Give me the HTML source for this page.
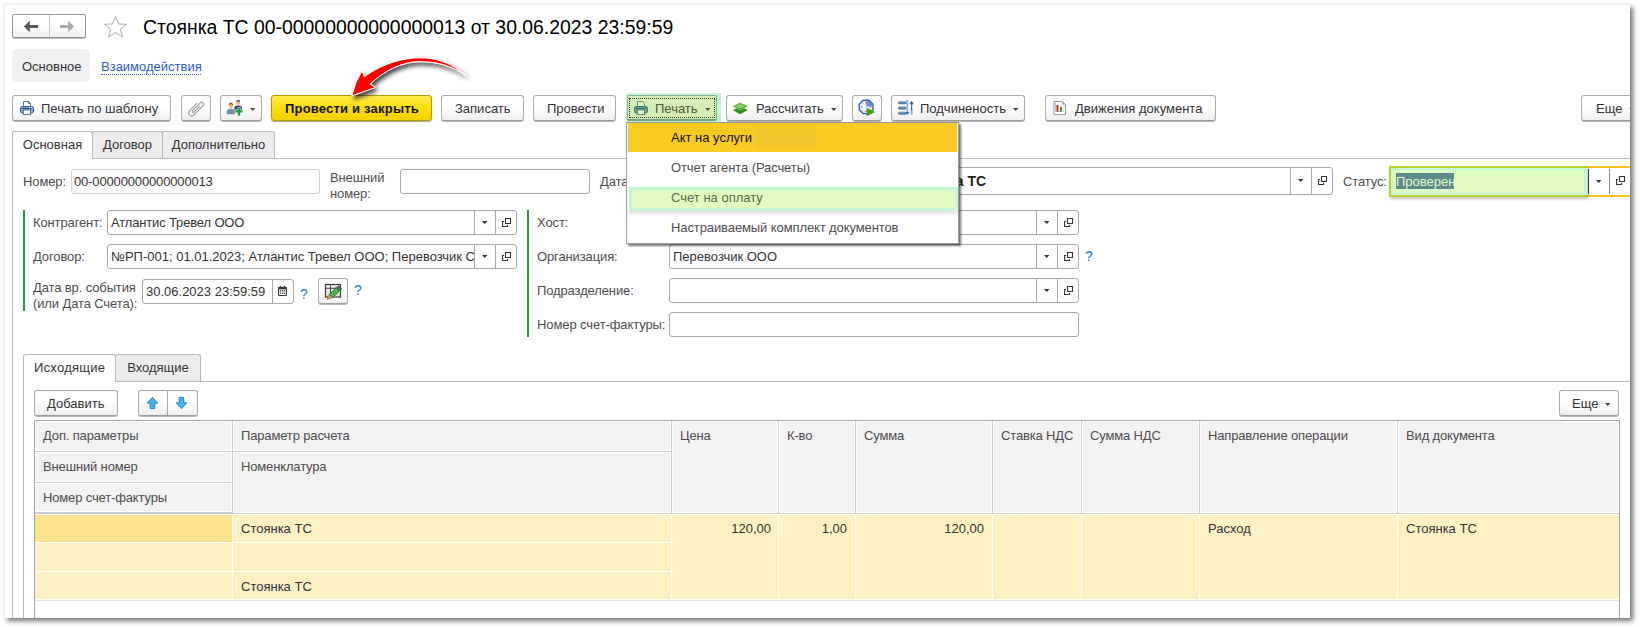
<!DOCTYPE html>
<html><head><meta charset="utf-8">
<style>
*{box-sizing:border-box;margin:0;padding:0}
html,body{width:1640px;height:627px;overflow:hidden;background:#fff}
body{position:relative;font-family:"Liberation Sans",sans-serif;font-size:13px;color:#4d4d4d}
.a{position:absolute}
.frame{position:absolute;left:4px;top:4px;width:1626px;height:614px;background:#fff;border-top:1px solid #ececec;border-left:1px solid #ececec;box-shadow:3px 3px 5px rgba(0,0,0,.55)}
.t{position:absolute;white-space:nowrap;line-height:15px}
.btn{position:absolute;height:26px;border:1px solid #ababab;border-bottom-color:#9a9a9a;border-radius:3px;background:linear-gradient(#fff 0%,#fff 45%,#eeeeee 100%);box-shadow:0 1px 0 rgba(0,0,0,.28);color:#333;white-space:nowrap;line-height:23px;font-size:13px}
.fld{position:absolute;height:25px;border:1px solid #a8a8a8;border-radius:3px;background:#fff;color:#333;white-space:nowrap;line-height:23px}
.tab{position:absolute;border:1px solid #b8b8b8;border-bottom:none;border-radius:3px 3px 0 0;background:#ececec;color:#333;line-height:26px;text-align:center}
.tab.on{background:#fff}
.lbl{position:absolute;white-space:nowrap;color:#4d4d4d;line-height:15px;letter-spacing:-0.12px}
.vd{position:absolute;top:0;bottom:0;width:1px;background:#b0b0b0}
.q{position:absolute;color:#1a7cc4;font-size:14px;line-height:13px}
.gbar{position:absolute;width:2px;background:#1f9a3a}
.hd{position:absolute;background:#f2f2f2;color:#4d4d4d;font-size:13px;line-height:15px}
.cell{position:absolute;color:#333;white-space:nowrap;line-height:15px}
</style></head><body>
<div class="frame"></div>
<div style="position:absolute;left:0;top:0;width:1630px;height:618px;overflow:hidden">

<!-- nav -->
<div class="a" style="left:12px;top:14px;width:74px;height:24px;border:1px solid #969696;border-bottom-color:#909090;border-radius:2px;background:linear-gradient(#fff 40%,#f0f0f0);box-shadow:0 1px 0 rgba(0,0,0,.25)"></div>
<div class="a" style="left:49px;top:15px;width:1px;height:22px;background:#c8c8c8"></div>
<svg class="a" style="left:23px;top:20px" width="16" height="14" viewBox="0 0 16 14"><path d="M0.8 6.5L6.8 0.8V5H15V8H6.8V12.2Z" fill="#555"/></svg>
<svg class="a" style="left:59px;top:20px" width="16" height="14" viewBox="0 0 16 14"><path d="M15.2 6.5L9.2 0.8V5H1V8H9.2V12.2Z" fill="#aaa"/></svg>
<svg class="a" style="left:103px;top:15px" width="25" height="24" viewBox="0 0 25 24"><path d="M12.5 1.5 L15.6 9 L23.5 9.3 L17.3 14.2 L19.5 22 L12.5 17.5 L5.5 22 L7.7 14.2 L1.5 9.3 L9.4 9 Z" fill="none" stroke="#a9b0b8" stroke-width="1"/></svg>
<div class="t" style="left:143px;top:17px;font-size:19.4px;line-height:20px;color:#000;letter-spacing:0">Стоянка ТС 00-00000000000000013 от 30.06.2023 23:59:59</div>

<!-- section tabs -->
<div class="a" style="left:12px;top:49px;width:78px;height:33px;background:#f0f0f0;border-radius:5px"></div>
<div class="t" style="left:22px;top:59px;color:#333">Основное</div>
<div class="t" style="left:101px;top:59px;color:#2d5ccc">Взаимодействия</div>
<div class="a" style="left:101px;top:74px;width:100px;height:0;border-top:1px dotted #3a66cc"></div>

<!-- toolbar -->
<div class="btn" style="left:12px;top:95px;width:159px"></div>
<svg class="a" style="left:20px;top:101px" width="14" height="14" viewBox="0 0 14 14"><path d="M3.5 0.5H8.5L10.5 2.5V6H3.5Z" fill="#fff" stroke="#5a7a98"/><path d="M8.5 0.5V2.5H10.5" fill="#5a7a98" stroke="#5a7a98"/><rect x="0.5" y="5.5" width="13" height="6.5" rx="1.8" fill="#7fa6cb" stroke="#2c5a84"/><path d="M2 7.5H12" stroke="#2c5a84"/><rect x="9" y="6" width="1.2" height="1" fill="#fff"/><rect x="11" y="6" width="1.2" height="1" fill="#fff"/><rect x="3.5" y="9" width="7" height="4.5" fill="#fff" stroke="#5a7a98"/></svg>
<div class="t" style="left:41px;top:101px;color:#333">Печать по шаблону</div>
<div class="btn" style="left:181px;top:95px;width:30px"></div>
<svg class="a" style="left:186px;top:98px" width="20" height="20" viewBox="-10 -10 20 20"><path d="M1 -4.5V4A1 1 0 0 1 -1 4V-7A2 2 0 0 1 3 -7V6A3 3 0 0 1 -3 6V-4.5" fill="none" stroke="#9a9a9a" stroke-width="1.1" transform="translate(0,0.5) rotate(45)"/></svg>
<div class="btn" style="left:220px;top:95px;width:42px"></div>
<svg class="a" style="left:226px;top:99px" width="18" height="18" viewBox="0 0 18 18">
<path d="M0.8 15.2V12.3Q0.8 10.2 3 9.9L4.9 9.6L6.8 9.9Q9 10.2 9 12.3V15.2Z" fill="#6a8fb0"/>
<path d="M4.5 10L4.9 15L5.3 10Z" fill="#e07850"/>
<ellipse cx="4.9" cy="7" rx="2.1" ry="2.6" fill="#f0c070"/><path d="M2.7 6.6Q2.7 3.8 4.9 3.8Q7.1 3.8 7.1 6.6Q6.5 5.2 4.9 5.2Q3.3 5.2 2.7 6.6Z" fill="#8a4a10"/>
<path d="M8.4 10.8V8.8Q8.4 7 10.4 6.7L12.2 6.5L14 6.7Q16 7 16 8.8V10.8Z" fill="#2c3f72"/>
<ellipse cx="12.2" cy="3.8" rx="2" ry="2.4" fill="#f0c070"/><path d="M10.1 3.4Q10.1 1 12.2 1Q14.3 1 14.3 3.4Q13.7 2.2 12.2 2.2Q10.7 2.2 10.1 3.4Z" fill="#23284a"/>
<path d="M11.6 8.6H14.4V11H16.9V13.8H14.4V16.9H11.6V13.8H9.1V11H11.6Z" fill="#16a03a" stroke="#fff" stroke-width="0.5"/>
</svg>
<svg class="a" style="left:250px;top:108px" width="6" height="4" viewBox="0 0 6 4"><path d="M0 0H5.5L2.75 3Z" fill="#444"/></svg>
<div class="btn" style="left:271px;top:95px;width:161px;border-color:#b49800;background:linear-gradient(#ffea50,#fbdc00 55%,#f3cf00);box-shadow:0 1px 1px rgba(80,60,0,.45)"></div>
<div class="t" style="left:285px;top:101px;font-weight:bold;color:#111;letter-spacing:0.2px">Провести и закрыть</div>
<div class="btn" style="left:441px;top:95px;width:83px"></div>
<div class="t" style="left:455px;top:101px;color:#333">Записать</div>
<div class="btn" style="left:533px;top:95px;width:83px"></div>
<div class="t" style="left:547px;top:101px;color:#333">Провести</div>
<!-- Печать pressed -->
<div class="a" style="left:626px;top:93px;width:95px;height:29px;background:#c4f6d2"></div>
<div class="a" style="left:627px;top:95px;width:90px;height:26px;border:1px solid #84b595;border-bottom:2px solid #6fa382;border-radius:2px;background:#d5edb6"></div>
<div class="a" style="left:629px;top:98px;width:86px;height:20px;border:1px dotted #2f3a22"></div>
<svg class="a" style="left:634px;top:101px" width="14" height="14" viewBox="0 0 14 14"><path d="M3.5 0.5H8.5L10.5 2.5V6H3.5Z" fill="#dff7c4" stroke="#5f8a72"/><rect x="0.5" y="5.5" width="13" height="6.5" rx="1.8" fill="#6a9f88" stroke="#3a7460"/><path d="M2 7.5H12" stroke="#3a7460"/><rect x="3.5" y="9" width="7" height="4.5" fill="#dff7c4" stroke="#5f8a72"/></svg>
<div class="t" style="left:655px;top:101px;color:#4d5a3c">Печать</div>
<svg class="a" style="left:705px;top:108px" width="6" height="4" viewBox="0 0 6 4"><path d="M0 0H5.5L2.75 3Z" fill="#4a5a3a"/></svg>
<div class="btn" style="left:726px;top:95px;width:117px"></div>
<svg class="a" style="left:732px;top:102px" width="17" height="13" viewBox="0 0 17 13"><path d="M0.8 8L8.2 4.6L15.8 8L8.2 12.2Z" fill="#2f9416"/><path d="M0.8 4.3L8.2 0.8L15.8 4.3L8.2 8Z" fill="#4aa82a" stroke="#c8ecb0" stroke-width="0.4"/><path d="M3.5 4.3L8.2 2.1L13 4.3L8.2 6.6Z" fill="#8fd66a"/></svg>
<div class="t" style="left:756px;top:101px;color:#333">Рассчитать</div>
<svg class="a" style="left:831px;top:108px" width="6" height="4" viewBox="0 0 6 4"><path d="M0 0H5.5L2.75 3Z" fill="#444"/></svg>
<div class="btn" style="left:852px;top:95px;width:30px"></div>
<svg class="a" style="left:858px;top:99px" width="18" height="18" viewBox="0 0 18 18"><path d="M5 1.2H11L15 5.2V10.6L11 14.6H5L1.2 10.6V5.2Z" fill="#e8f0fb" stroke="#3563b0" stroke-width="1.4"/><path d="M8.3 2H10.8L14.2 5.4V7.6H8.3Z" fill="#6f90c8"/><circle cx="3.7" cy="8" r="0.8" fill="#f04a3a"/><circle cx="12.5" cy="8" r="0.8" fill="#f04a3a"/><circle cx="8" cy="3.6" r="0.8" fill="#f04a3a"/><circle cx="8" cy="12.3" r="0.8" fill="#f04a3a"/><path d="M8.6 8.8L17.2 13L8.6 17.2Z" fill="#3c9f16"/></svg>
<div class="btn" style="left:891px;top:95px;width:134px"></div>
<svg class="a" style="left:897px;top:100px" width="18" height="16" viewBox="0 0 18 16"><defs><linearGradient id="bg1" x1="0" y1="0" x2="0" y2="1"><stop offset="0" stop-color="#9fbad6"/><stop offset="0.5" stop-color="#5a88b4"/><stop offset="1" stop-color="#3f6f9e"/></linearGradient></defs><rect x="1" y="1" width="8.5" height="3.3" rx="1.6" fill="url(#bg1)"/><rect x="1" y="6.2" width="8.5" height="3.3" rx="1.6" fill="url(#bg1)"/><rect x="1" y="11.4" width="8.5" height="3.3" rx="1.6" fill="url(#bg1)"/><path d="M10.3 0.5V12.5" stroke="#3a6aa0" stroke-width="2" stroke-dasharray="1 1"/><path d="M8.3 12H12.3L10.3 15Z" fill="#2f5f95"/><path d="M14.6 3.5V10" stroke="#2f5f95" stroke-width="1.1"/><path d="M12.4 4.3L14.6 0.8L16.8 4.3Z" fill="#2f5f95"/><path d="M14.6 9.5V15" stroke="#3a6aa0" stroke-width="2.2" stroke-dasharray="1 1"/></svg>
<div class="t" style="left:920px;top:101px;color:#333">Подчиненость</div>
<svg class="a" style="left:1013px;top:108px" width="6" height="4" viewBox="0 0 6 4"><path d="M0 0H5.5L2.75 3Z" fill="#444"/></svg>
<div class="btn" style="left:1045px;top:95px;width:171px"></div>
<svg class="a" style="left:1053px;top:100px" width="14" height="16" viewBox="0 0 14 16"><path d="M1 1.5H9.5L12.5 4.5V14.5H1Z" fill="#fff" stroke="#8a98a8"/><path d="M9.5 1.5V4.5H12.5Z" fill="#8a98a8"/><path d="M2.5 3V11.5H11" fill="none" stroke="#8a9ab0" stroke-width="0.6"/><rect x="3.5" y="5" width="2" height="6.5" fill="#f02010"/><rect x="7" y="6.8" width="2" height="4.7" fill="#20a020"/></svg>
<div class="t" style="left:1075px;top:101px;color:#333">Движения документа</div>
<div class="btn" style="left:1581px;top:95px;width:60px"></div>
<div class="t" style="left:1596px;top:101px;color:#333">Еще</div>
<svg class="a" style="left:1629px;top:108px" width="6" height="4" viewBox="0 0 6 4"><path d="M0 0H5.5L2.75 3Z" fill="#444"/></svg>

<!-- main tabs -->
<div class="a" style="left:12px;top:158px;width:1620px;height:1px;background:#b8b8b8"></div>
<div class="a" style="left:12px;top:158px;width:1px;height:461px;background:#b8b8b8"></div>
<div class="tab" style="left:92px;top:131px;width:71px;height:27px">Договор</div>
<div class="tab" style="left:162px;top:131px;width:113px;height:27px">Дополнительно</div>
<div class="tab on" style="left:12px;top:131px;width:81px;height:28px">Основная</div>

<!-- Row Номер -->
<div class="lbl" style="left:23px;top:174px">Номер:</div>
<div class="fld" style="left:71px;top:169px;width:249px;border-color:#d0d0d0"><span style="margin-left:2px;letter-spacing:-0.15px">00-00000000000000013</span></div>
<div class="lbl" style="left:330px;top:170px">Внешний</div>
<div class="lbl" style="left:330px;top:186px">номер:</div>
<div class="fld" style="left:400px;top:169px;width:190px"></div>
<div class="lbl" style="left:600px;top:174px">Дата</div>
<div class="fld" style="left:700px;top:167px;width:633px;height:28px"></div>
<div class="a" style="left:1290px;top:168px;width:1px;height:26px;background:#a8a8a8"></div>
<div class="a" style="left:1311px;top:168px;width:1px;height:26px;background:#a8a8a8"></div>
<svg class="a" style="left:1298px;top:179px" width="6" height="4" viewBox="0 0 6 4"><path d="M0 0H5.5L2.75 3Z" fill="#333"/></svg>
<svg class="a" style="left:1318px;top:176px" width="10" height="10" viewBox="0 0 10 10"><path d="M3.5 0.5H8.5V5.5H3.5Z" fill="none" stroke="#333" stroke-width="1.1"/><path d="M2 3.5H0.6V8.5H5.5V7" fill="none" stroke="#333" stroke-width="1.1"/></svg>
<div class="t" style="left:907px;top:173px;font-weight:bold;color:#222;font-size:14px;line-height:17px">Стоянка ТС</div>
<div class="lbl" style="left:1343px;top:174px">Статус:</div>

<!-- left group -->
<div class="gbar" style="left:23px;top:210px;height:101px"></div>
<div class="lbl" style="left:33px;top:215px">Контрагент:</div>
<div class="fld" style="left:107px;top:210px;width:410px"><span style="margin-left:3px;letter-spacing:-0.15px">Атлантис Тревел ООО</span></div>
<div class="lbl" style="left:33px;top:249px">Договор:</div>
<div class="fld" style="left:107px;top:244px;width:410px;overflow:hidden"><span style="margin-left:3px">№РП-001; 01.01.2023; Атлантис Тревел ООО; Перевозчик С</span></div>
<div class="lbl" style="left:33px;top:280px;letter-spacing:-0.12px">Дата вр. события</div>
<div class="lbl" style="left:33px;top:296px;letter-spacing:-0.12px">(или Дата Счета):</div>
<div class="fld" style="left:142px;top:279px;width:152px"><span style="margin-left:3px">30.06.2023 23:59:59</span></div>
<div class="q" style="left:300px;top:288px">?</div>
<div class="btn" style="left:318px;top:278px;width:30px"></div>
<div class="q" style="left:354px;top:284px">?</div>

<!-- right group -->
<div class="gbar" style="left:527px;top:210px;height:127px"></div>
<div class="lbl" style="left:537px;top:215px">Хост:</div>
<div class="fld" style="left:669px;top:210px;width:410px"></div>
<div class="lbl" style="left:537px;top:249px">Организация:</div>
<div class="fld" style="left:669px;top:244px;width:410px"><span style="margin-left:3px">Перевозчик ООО</span></div>
<div class="q" style="left:1085px;top:250px">?</div>
<div class="lbl" style="left:537px;top:283px">Подразделение:</div>
<div class="fld" style="left:669px;top:278px;width:410px"></div>
<div class="lbl" style="left:537px;top:317px;letter-spacing:-0.1px">Номер счет-фактуры:</div>
<div class="fld" style="left:669px;top:312px;width:410px"></div>

<div class="a" style="left:474px;top:211px;width:1px;height:23px;background:#a8a8a8"></div>
<div class="a" style="left:495px;top:211px;width:1px;height:23px;background:#a8a8a8"></div>
<svg class="a" style="left:482px;top:221px" width="6" height="4" viewBox="0 0 6 4"><path d="M0 0H5.5L2.75 3Z" fill="#333"/></svg>
<svg class="a" style="left:502px;top:218px" width="10" height="10" viewBox="0 0 10 10"><path d="M3.5 0.5H8.5V5.5H3.5Z" fill="none" stroke="#333" stroke-width="1.1"/><path d="M2 3.5H0.6V8.5H5.5V7" fill="none" stroke="#333" stroke-width="1.1"/></svg>
<div class="a" style="left:474px;top:245px;width:1px;height:23px;background:#a8a8a8"></div>
<div class="a" style="left:495px;top:245px;width:1px;height:23px;background:#a8a8a8"></div>
<svg class="a" style="left:482px;top:255px" width="6" height="4" viewBox="0 0 6 4"><path d="M0 0H5.5L2.75 3Z" fill="#333"/></svg>
<svg class="a" style="left:502px;top:252px" width="10" height="10" viewBox="0 0 10 10"><path d="M3.5 0.5H8.5V5.5H3.5Z" fill="none" stroke="#333" stroke-width="1.1"/><path d="M2 3.5H0.6V8.5H5.5V7" fill="none" stroke="#333" stroke-width="1.1"/></svg>
<div class="a" style="left:1036px;top:211px;width:1px;height:23px;background:#a8a8a8"></div>
<div class="a" style="left:1057px;top:211px;width:1px;height:23px;background:#a8a8a8"></div>
<svg class="a" style="left:1044px;top:221px" width="6" height="4" viewBox="0 0 6 4"><path d="M0 0H5.5L2.75 3Z" fill="#333"/></svg>
<svg class="a" style="left:1064px;top:218px" width="10" height="10" viewBox="0 0 10 10"><path d="M3.5 0.5H8.5V5.5H3.5Z" fill="none" stroke="#333" stroke-width="1.1"/><path d="M2 3.5H0.6V8.5H5.5V7" fill="none" stroke="#333" stroke-width="1.1"/></svg>
<div class="a" style="left:1036px;top:245px;width:1px;height:23px;background:#a8a8a8"></div>
<div class="a" style="left:1057px;top:245px;width:1px;height:23px;background:#a8a8a8"></div>
<svg class="a" style="left:1044px;top:255px" width="6" height="4" viewBox="0 0 6 4"><path d="M0 0H5.5L2.75 3Z" fill="#333"/></svg>
<svg class="a" style="left:1064px;top:252px" width="10" height="10" viewBox="0 0 10 10"><path d="M3.5 0.5H8.5V5.5H3.5Z" fill="none" stroke="#333" stroke-width="1.1"/><path d="M2 3.5H0.6V8.5H5.5V7" fill="none" stroke="#333" stroke-width="1.1"/></svg>
<div class="a" style="left:1036px;top:279px;width:1px;height:23px;background:#a8a8a8"></div>
<div class="a" style="left:1057px;top:279px;width:1px;height:23px;background:#a8a8a8"></div>
<svg class="a" style="left:1044px;top:289px" width="6" height="4" viewBox="0 0 6 4"><path d="M0 0H5.5L2.75 3Z" fill="#333"/></svg>
<svg class="a" style="left:1064px;top:286px" width="10" height="10" viewBox="0 0 10 10"><path d="M3.5 0.5H8.5V5.5H3.5Z" fill="none" stroke="#333" stroke-width="1.1"/><path d="M2 3.5H0.6V8.5H5.5V7" fill="none" stroke="#333" stroke-width="1.1"/></svg>
<!-- lower tabs -->
<div class="a" style="left:23px;top:381px;width:1609px;height:1px;background:#b8b8b8"></div>
<div class="a" style="left:23px;top:381px;width:1px;height:238px;background:#b8b8b8"></div>
<div class="tab" style="left:115px;top:354px;width:86px;height:27px">Входящие</div>
<div class="tab on" style="left:23px;top:354px;width:93px;height:28px;text-align:left;padding-left:10px;letter-spacing:0.25px">Исходящие</div>
<div class="btn" style="left:34px;top:390px;width:84px"></div>
<div class="t" style="left:47px;top:396px;color:#333">Добавить</div>
<div class="btn" style="left:138px;top:390px;width:60px"></div>
<div class="a" style="left:167px;top:391px;width:1px;height:24px;background:#a8a8a8"></div>
<svg class="a" style="left:146px;top:396px" width="13" height="14" viewBox="0 0 13 14"><path d="M1.2 7.2L6.5 1.3L11.8 7.2H8.8V12.6H4.2V7.2Z" fill="#48b0ea" stroke="#1f7bbf" stroke-width="0.9" stroke-linejoin="miter"/></svg>
<svg class="a" style="left:175px;top:396px" width="13" height="14" viewBox="0 0 13 14"><path d="M1.2 6.8L6.5 12.7L11.8 6.8H8.8V1.4H4.2V6.8Z" fill="#48b0ea" stroke="#1f7bbf" stroke-width="0.9" stroke-linejoin="miter"/></svg>
<div class="btn" style="left:1559px;top:390px;width:60px"></div>
<div class="t" style="left:1572px;top:396px;color:#333">Еще</div>
<svg class="a" style="left:1605px;top:403px" width="6" height="4" viewBox="0 0 6 4"><path d="M0 0H5.5L2.75 3Z" fill="#444"/></svg>

<!-- table -->
<div class="a" style="left:34px;top:420px;width:1586px;height:199px;border:1px solid #a6a6a6;border-bottom:none;background:#fff"></div>
<div class="a" style="left:35px;top:421px;width:1584px;height:93px;background:#cdcdcd"></div>
<div class="a" style="left:35px;top:421px;width:197px;height:30px;background:#f2f2f2;box-shadow:inset 0 0 0 1px #fff"></div>
<div class="a" style="left:35px;top:452px;width:197px;height:30px;background:#f2f2f2;box-shadow:inset 0 0 0 1px #fff"></div>
<div class="a" style="left:35px;top:483px;width:197px;height:29px;background:#f2f2f2;box-shadow:inset 0 0 0 1px #fff"></div>
<div class="a" style="left:233px;top:421px;width:438px;height:30px;background:#f2f2f2;box-shadow:inset 0 0 0 1px #fff"></div>
<div class="a" style="left:233px;top:452px;width:438px;height:61px;background:#f2f2f2;box-shadow:inset 0 0 0 1px #fff"></div>
<div class="a" style="left:672px;top:421px;width:106px;height:92px;background:#f2f2f2;box-shadow:inset 0 0 0 1px #fff"></div>
<div class="a" style="left:779px;top:421px;width:76px;height:92px;background:#f2f2f2;box-shadow:inset 0 0 0 1px #fff"></div>
<div class="a" style="left:856px;top:421px;width:136px;height:92px;background:#f2f2f2;box-shadow:inset 0 0 0 1px #fff"></div>
<div class="a" style="left:993px;top:421px;width:88px;height:92px;background:#f2f2f2;box-shadow:inset 0 0 0 1px #fff"></div>
<div class="a" style="left:1082px;top:421px;width:117px;height:92px;background:#f2f2f2;box-shadow:inset 0 0 0 1px #fff"></div>
<div class="a" style="left:1200px;top:421px;width:197px;height:92px;background:#f2f2f2;box-shadow:inset 0 0 0 1px #fff"></div>
<div class="a" style="left:1398px;top:421px;width:221px;height:92px;background:#f2f2f2;box-shadow:inset 0 0 0 1px #fff"></div>
<div class="a" style="left:35px;top:514px;width:1584px;height:87px;background:#fff"></div>
<div class="a" style="left:35px;top:515px;width:197px;height:27px;background:#fde28e"></div>
<div class="a" style="left:233px;top:515px;width:438px;height:27px;background:#fdf0c5"></div>
<div class="a" style="left:35px;top:543px;width:197px;height:28px;background:#fdf0c5"></div>
<div class="a" style="left:233px;top:543px;width:438px;height:28px;background:#fdf0c5"></div>
<div class="a" style="left:35px;top:572px;width:197px;height:27px;background:#fdf0c5"></div>
<div class="a" style="left:233px;top:572px;width:438px;height:27px;background:#fdf0c5"></div>
<div class="a" style="left:672px;top:515px;width:106px;height:84px;background:#fdf0c5"></div>
<div class="a" style="left:779px;top:515px;width:76px;height:84px;background:#fdf0c5"></div>
<div class="a" style="left:856px;top:515px;width:136px;height:84px;background:#fdf0c5"></div>
<div class="a" style="left:993px;top:515px;width:88px;height:84px;background:#fdf0c5"></div>
<div class="a" style="left:1082px;top:515px;width:117px;height:84px;background:#fdf0c5"></div>
<div class="a" style="left:1200px;top:515px;width:197px;height:84px;background:#fdf0c5"></div>
<div class="a" style="left:1398px;top:515px;width:221px;height:84px;background:#fdf0c5"></div>
<div class="a" style="left:35px;top:600px;width:1584px;height:1px;background:#e2e2e2"></div>
<div class="t" style="left:43px;top:428px;color:#4d4d4d;letter-spacing:-0.15px">Доп. параметры</div>
<div class="t" style="left:43px;top:459px;color:#4d4d4d;letter-spacing:-0.15px">Внешний номер</div>
<div class="t" style="left:43px;top:490px;color:#4d4d4d;letter-spacing:-0.15px">Номер счет-фактуры</div>
<div class="t" style="left:241px;top:428px;color:#4d4d4d;letter-spacing:-0.15px">Параметр расчета</div>
<div class="t" style="left:241px;top:459px;color:#4d4d4d;letter-spacing:-0.15px">Номенклатура</div>
<div class="t" style="left:680px;top:428px;color:#4d4d4d;letter-spacing:-0.15px">Цена</div>
<div class="t" style="left:787px;top:428px;color:#4d4d4d;letter-spacing:-0.15px">К-во</div>
<div class="t" style="left:864px;top:428px;color:#4d4d4d;letter-spacing:-0.15px">Сумма</div>
<div class="t" style="left:1001px;top:428px;color:#4d4d4d;letter-spacing:-0.15px">Ставка НДС</div>
<div class="t" style="left:1090px;top:428px;color:#4d4d4d;letter-spacing:-0.15px">Сумма НДС</div>
<div class="t" style="left:1208px;top:428px;color:#4d4d4d;letter-spacing:-0.15px">Направление операции</div>
<div class="t" style="left:1406px;top:428px;color:#4d4d4d;letter-spacing:-0.15px">Вид документа</div>
<div class="t" style="left:241px;top:521px;color:#333">Стоянка ТС</div>
<div class="t" style="left:241px;top:579px;color:#333">Стоянка ТС</div>
<div class="t" style="left:672px;top:521px;width:99px;text-align:right;color:#333">120,00</div>
<div class="t" style="left:779px;top:521px;width:68px;text-align:right;color:#333">1,00</div>
<div class="t" style="left:856px;top:521px;width:128px;text-align:right;color:#333">120,00</div>
<div class="t" style="left:1208px;top:521px;color:#333">Расход</div>
<div class="t" style="left:1406px;top:521px;color:#333">Стоянка ТС</div>

<!-- date field extras -->
<div class="a" style="left:272px;top:280px;width:1px;height:23px;background:#a8a8a8"></div>
<svg class="a" style="left:277px;top:285px" width="11" height="12" viewBox="0 0 11 12"><rect x="1" y="1.8" width="9" height="9.2" rx="1.2" fill="#3c3c3c"/><rect x="2.1" y="4.4" width="6.8" height="5.6" fill="#fff"/><rect x="2.8" y="0.9" width="1.2" height="1.6" fill="#3c3c3c"/><rect x="7" y="0.9" width="1.2" height="1.6" fill="#3c3c3c"/><rect x="2.9" y="5.3" width="1.3" height="1.3" fill="#3c3c3c"/><rect x="4.85" y="5.3" width="1.3" height="1.3" fill="#3c3c3c"/><rect x="6.8" y="5.3" width="1.3" height="1.3" fill="#3c3c3c"/><rect x="2.9" y="7.6" width="1.3" height="1.3" fill="#3c3c3c"/><rect x="4.85" y="7.6" width="1.3" height="1.3" fill="#3c3c3c"/><rect x="6.8" y="7.6" width="1.3" height="1.3" fill="#3c3c3c"/></svg>
<svg class="a" style="left:324px;top:283px" width="18" height="17" viewBox="0 0 18 17"><rect x="1.5" y="1.5" width="15" height="12.5" fill="#f2f2f2" stroke="#333" stroke-width="1.2"/><path d="M1.5 9H16.5M1.5 12H16.5M11 1.5V14" stroke="#c4c4c4" stroke-width="0.9"/><path d="M1.5 5.3H16.5M6.5 1.5V14" stroke="#444" stroke-width="1"/><path d="M5.1 11.4L12.4 4.6L15.6 8L8.3 14.8Z" fill="#48b648" stroke="#1f5a2a" stroke-width="0.8"/><path d="M12.4 4.6L14.6 2.5L17.8 5.9L15.6 8Z" fill="#5a6a7a" stroke="#3a4550" stroke-width="0.6"/><path d="M5.1 11.4L8.3 14.8L3.2 16.6Z" fill="#d6a65a" stroke="#7a5a30" stroke-width="0.5"/></svg>

<!-- red arrow -->
<svg class="a" style="left:330px;top:50px;overflow:visible" width="150" height="60" viewBox="330 50 150 60"><defs><filter id="sh" x="-20%" y="-30%" width="150%" height="180%"><feGaussianBlur in="SourceAlpha" stdDeviation="2.4"/><feOffset dx="2" dy="3" result="b"/><feComponentTransfer><feFuncA type="linear" slope="0.8"/></feComponentTransfer><feMerge><feMergeNode/><feMergeNode in="SourceGraphic"/></feMerge></filter></defs>
<path filter="url(#sh)" d="M351.8 95.9Q355 82 362 70.8L364.4 76.6C382 64 402 57.8 420 57.8C438 57.8 453 64 466 75.5C452 65.8 437 61.6 420 61.6C403 61.6 385 70 370.2 84L375.6 87.4Z" fill="#ff0000" stroke="#fff" stroke-width="1" stroke-linejoin="round"/></svg>

<!-- status field -->
<div class="a" style="left:1389px;top:166px;width:243px;height:31px;border:2px solid #f6c21a;border-right:none;background:#fff"></div>
<div class="a" style="left:1588px;top:169px;width:1px;height:25px;background:#444"></div>
<div class="a" style="left:1609px;top:169px;width:1px;height:25px;background:#888"></div>
<svg class="a" style="left:1596px;top:180px" width="6" height="4" viewBox="0 0 6 4"><path d="M0 0H5.5L2.75 3Z" fill="#333"/></svg>
<svg class="a" style="left:1616px;top:176px" width="10" height="10" viewBox="0 0 10 10"><path d="M3.5 0.5H8.5V5.5H3.5Z" fill="none" stroke="#333" stroke-width="1.1"/><path d="M2 3.5H0.6V8.5H5.5V7" fill="none" stroke="#333" stroke-width="1.1"/></svg>
<div class="a" style="left:1389px;top:166px;width:198px;height:31px;background:#b9d22a;box-shadow:1px 2px 3px rgba(0,0,0,.25)"></div>
<div class="a" style="left:1391px;top:168px;width:196px;height:27px;background:#c6f7d6"></div>
<div class="a" style="left:1393px;top:170px;width:191px;height:23px;background:#e0fcc2"></div>
<div class="a" style="left:1396px;top:173px;width:58px;height:16px;background:#5b8a8f"></div>
<div class="t" style="left:1396px;top:174px;color:#e2f7c0">Проверен</div>

<!-- dropdown menu -->
<div class="a" style="left:626px;top:122px;width:333px;height:122px;background:#fff;border:1px solid #a0a0a0;border-top-color:#959595;box-shadow:2px 2px 2px rgba(0,0,0,.55)"></div>
<div class="a" style="left:628px;top:123px;width:329px;height:29px;background:#f8cb22"></div>
<div class="a" style="left:756px;top:128px;width:60px;height:20px;background:#f1c52a;filter:blur(1px)"></div>
<div class="t" style="left:671px;top:130px;color:#111">Акт на услуги</div>
<div class="t" style="left:671px;top:160px;color:#4d4d4d;letter-spacing:-0.1px">Отчет агента (Расчеты)</div>
<div class="a" style="left:629px;top:187px;width:329px;height:24px;background:#c4f8d2;box-shadow:0 3px 3px rgba(0,0,0,.12)"></div>
<div class="a" style="left:632px;top:190px;width:323px;height:18px;background:#e0fcc2"></div>
<div class="t" style="left:671px;top:190px;color:#5a6a4a">Счет на оплату</div>
<div class="t" style="left:671px;top:220px;color:#4d4d4d;letter-spacing:-0.1px">Настраиваемый комплект документов</div>

</div>
</body></html>
